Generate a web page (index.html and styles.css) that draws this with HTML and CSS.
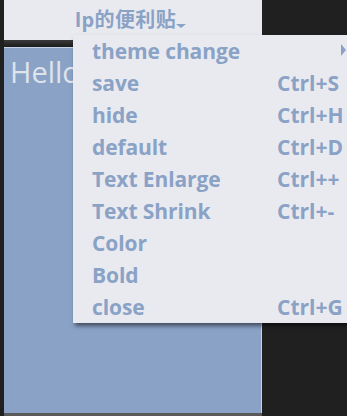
FILE: index.html
```html
<!DOCTYPE html>
<html>
<head>
<meta charset="utf-8">
<link rel="stylesheet" href="styles.css">
</head>
<body>
<div class="window">
  <div class="titlebar">
    <span class="title">lp的便利贴</span><span class="caret"></span>
  </div>
  <div class="gap"></div>
  <div class="note">
    <div class="hello">Hello</div>
  </div>
  <div class="bottom-shadow"></div>
</div>
<div class="menu">
  <div class="item"><span class="label">theme change</span><span class="key"></span><span class="arrow"></span></div>
  <div class="item"><span class="label">save</span><span class="key">Ctrl+S</span></div>
  <div class="item"><span class="label">hide</span><span class="key">Ctrl+H</span></div>
  <div class="item"><span class="label">default</span><span class="key">Ctrl+D</span></div>
  <div class="item"><span class="label">Text Enlarge</span><span class="key">Ctrl++</span></div>
  <div class="item"><span class="label">Text Shrink</span><span class="key">Ctrl+-</span></div>
  <div class="item"><span class="label">Color</span><span class="key"></span></div>
  <div class="item"><span class="label">Bold</span><span class="key"></span></div>
  <div class="item"><span class="label">close</span><span class="key">Ctrl+G</span></div>
</div>
</body>
</html>
```
FILE: styles.css
```css
html, body {
  margin: 0;
  padding: 0;
  background: #202020;
  width: 347px;
  height: 416px;
  overflow: hidden;
  font-family: "Open Sans", "Noto Sans CJK SC", sans-serif;
}
.window {
  margin-left: 4px;
  width: 258px;
  display: flex;
  flex-direction: column;
}
.titlebar {
  height: 40px;
  background: #e9eaef;
  display: flex;
  align-items: center;
  padding-left: 71px;
  box-sizing: border-box;
}
.title {
  font-family: "Open Sans", "Noto Sans CJK SC", sans-serif;
  font-weight: 700;
  font-size: 20px;
  color: #8aa2c6;
  line-height: 1;
  letter-spacing: 0.4px;
}
.caret {
  width: 0;
  height: 0;
  border-left: 5px solid transparent;
  border-right: 5px solid transparent;
  border-top: 4px solid #8aa2c6;
  margin-left: 0;
  margin-top: 12px;
}
.gap {
  height: 7px;
  background: linear-gradient(#3a3a3a, #1c1c1c);
}
.note {
  height: 366px;
  background: #8aa2c6;
  border-top: 1px solid #c6d2e6;
  border-right: 1px solid #c6d2e6;
  box-sizing: border-box;
}
.hello {
  font-family: "Open Sans", sans-serif;
  font-size: 29px;
  color: #dfe3ea;
  padding-left: 6px;
  line-height: 1;
  margin-top: 9px;
}
.bottom-shadow {
  height: 4px;
  background: #5a5a5a;
}
.menu {
  position: absolute;
  left: 73px;
  top: 35px;
  width: 290px;
  background: #e9eaef;
  box-shadow: 2px 3px 4px rgba(0, 0, 0, 0.5);
}
.item {
  height: 32px;
  display: flex;
  align-items: center;
  padding-left: 19px;
  font-weight: 700;
  font-size: 21px;
  color: #8aa2c6;
  position: relative;
}
.label {
  width: 185px;
  letter-spacing: -0.1px;
}
.key {
  letter-spacing: 0;
}
.arrow {
  position: absolute;
  left: 268px;
  top: 9px;
  width: 0;
  height: 0;
  border-top: 6px solid transparent;
  border-bottom: 6px solid transparent;
  border-left: 5px solid #8aa2c6;
}
```
